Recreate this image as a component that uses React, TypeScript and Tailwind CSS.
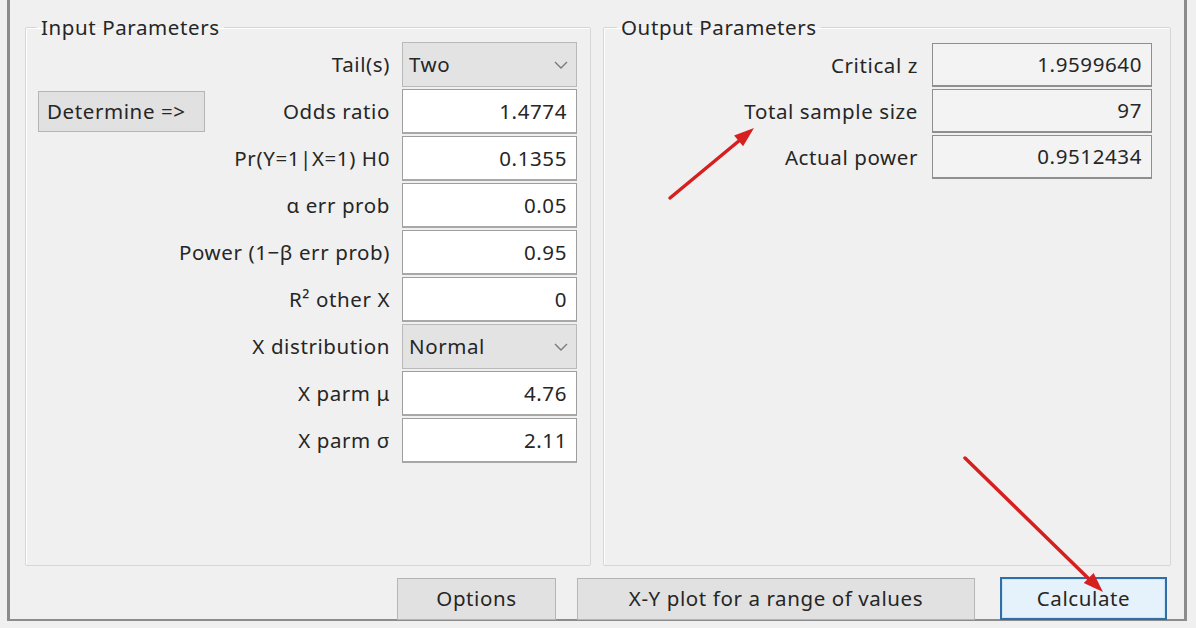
import React from "react";

const inputRows: { label: React.ReactNode; value: string; select?: boolean }[] = [
  { label: "Tail(s)", value: "Two", select: true },
  { label: "Odds ratio", value: "1.4774" },
  { label: "Pr(Y=1|X=1) H0", value: "0.1355" },
  { label: "α err prob", value: "0.05" },
  { label: "Power (1−β err prob)", value: "0.95" },
  { label: "R² other X", value: "0" },
  { label: "X distribution", value: "Normal", select: true },
  { label: "X parm μ", value: "4.76" },
  { label: "X parm σ", value: "2.11" },
];

const outputRows = [
  { label: "Critical z", value: "1.9599640" },
  { label: "Total sample size", value: "97" },
  { label: "Actual power", value: "0.9512434" },
];

function Chevron() {
  return (
    <svg width="14" height="8" viewBox="0 0 14 8" className="ml-auto">
      <polyline points="1,1 7,7 13,1" fill="none" stroke="#7a7a7a" strokeWidth="1.4" />
    </svg>
  );
}

export default function App() {
  return (
    <div className="relative w-[1196px] h-[628px] overflow-hidden bg-[#f0f0f0] text-[20.5px] tracking-[0.6px] text-[#262626] font-['Noto_Sans',sans-serif]">
      <div className="ml-[7px] w-[1180px] h-[621px] border-l-[3px] border-r-[3px] border-b-2 border-[#8c8c8c] flex flex-col pt-[14px]">
        <div className="flex gap-[12px] pl-[15px]">
          {/* Input Parameters */}
          <fieldset className="w-[566px] h-[552px] border border-[#d6d6d6] rounded-[2px] shadow-[inset_1px_1px_0_#ffffff]">
            <legend className="ml-[11px] px-[4px] leading-[26px]">Input Parameters</legend>
            <div className="flex flex-col gap-[2px] pt-[2px] pl-[12px] pr-[13px]">
              {inputRows.map((r, i) => (
                <div key={i} className="flex items-center h-[45px]">
                  {i === 1 && (
                    <button className="w-[167px] h-[41px] bg-[#e1e1e1] border border-[#b5b5b5] text-left pl-[8px] whitespace-nowrap">
                      Determine =&gt;
                    </button>
                  )}
                  <span className="ml-auto mr-[12px] whitespace-nowrap">{r.label}</span>
                  {r.select ? (
                    <div className="w-[175px] h-[45px] bg-[#e3e3e3] border border-[#b9b9b9] flex items-center pl-[6px] pr-[8px]">
                      <span>{r.value}</span>
                      <Chevron />
                    </div>
                  ) : (
                    <div className="w-[175px] h-[45px] bg-white border border-[#9e9e9e] border-b-2 border-b-[#a8a8a8] flex items-center justify-end pr-[9px]">
                      {r.value}
                    </div>
                  )}
                </div>
              ))}
            </div>
          </fieldset>
          {/* Output Parameters */}
          <fieldset className="w-[568px] h-[552px] border border-[#d6d6d6] rounded-[2px] shadow-[inset_1px_1px_0_#ffffff]">
            <legend className="ml-[13px] px-[4px] leading-[26px]">Output Parameters</legend>
            <div className="flex flex-col gap-[2px] pt-[3px] pr-[18px]">
              {outputRows.map((r, i) => (
                <div key={i} className="flex items-center h-[44px]">
                  <span className="ml-auto mr-[14px] whitespace-nowrap">{r.label}</span>
                  <div className="w-[220px] h-[44px] bg-[#f3f3f3] border border-[#8f8f8f] border-b-2 flex items-center justify-end pr-[9px]">
                    {r.value}
                  </div>
                </div>
              ))}
            </div>
          </fieldset>
        </div>
        <div className="flex justify-end items-center pr-[17px] mt-[11px]">
          <button className="w-[159px] h-[42px] bg-[#e1e1e1] border border-[#b5b5b5]">
            Options
          </button>
          <button className="ml-[21px] w-[398px] h-[42px] bg-[#e1e1e1] border border-[#b5b5b5]">
            X-Y plot for a range of values
          </button>
          <button className="ml-[25px] w-[167px] h-[43px] bg-[#e5f1fb] border-2 border-[#2f6ea6] shadow-[inset_0_0_0_1px_#cfe6f7]">
            Calculate
          </button>
        </div>
      </div>
      <svg className="absolute inset-0 pointer-events-none" width="1196" height="628" viewBox="0 0 1196 628">
        <line x1="670" y1="198" x2="740" y2="140" stroke="#d61f1f" strokeWidth="3.5" strokeLinecap="round" />
        <polygon points="754,128 743.1,146.2 734.1,135.4" fill="#d61f1f" />
        <line x1="965" y1="458" x2="1090" y2="580" stroke="#d61f1f" strokeWidth="3.5" strokeLinecap="round" />
        <polygon points="1103,592 1083.8,583.1 1093.6,573.1" fill="#d61f1f" />
      </svg>
    </div>
  );
}
